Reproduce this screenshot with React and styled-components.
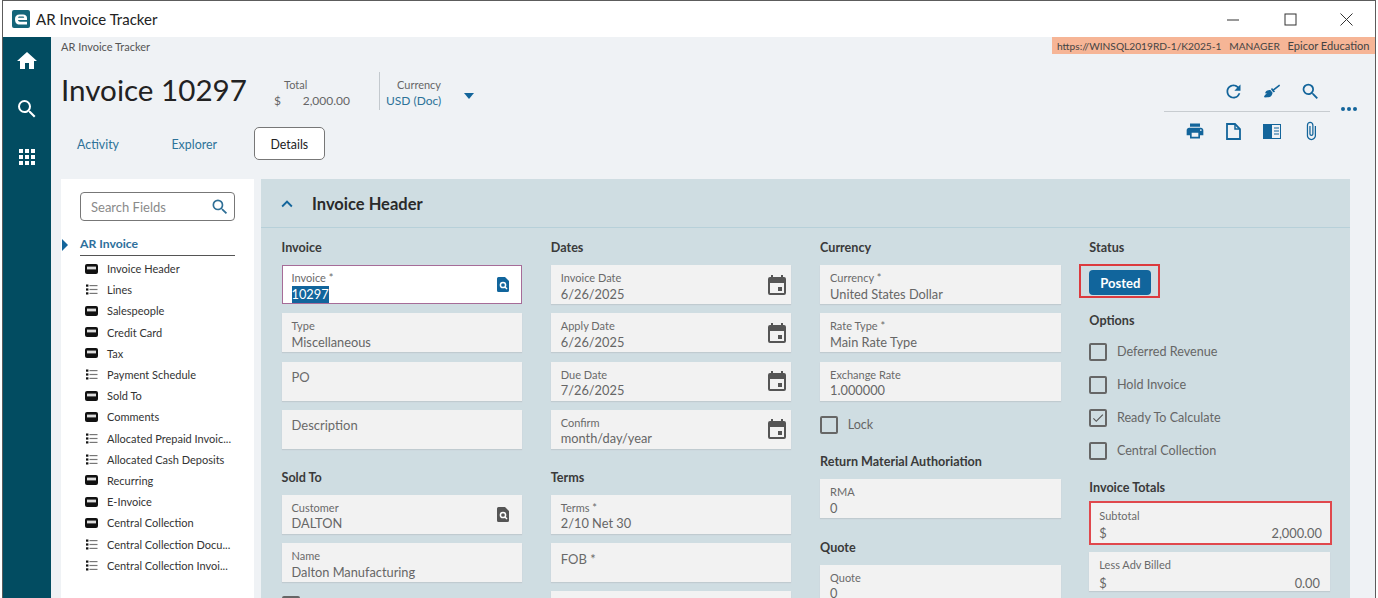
import React from "react";
import styled, { createGlobalStyle } from "styled-components";
import {
  MdHome,
  MdSearch,
  MdApps,
  MdRefresh,
  MdPrint,
  MdAttachFile,
  MdKeyboardArrowUp,
  MdCheck,
} from "react-icons/md";
import { FaBroom } from "react-icons/fa";

const GlobalStyle = createGlobalStyle`
  html, body { margin: 0; padding: 0; background: #fff; }
  body { font-family: "Lato", "Noto Sans", sans-serif; overflow: hidden; }
  * { box-sizing: border-box; }
`;

const Screen = styled.div`
  width: 1378px;
  height: 598px;
  padding: 0 2px;
  overflow: hidden;
`;
const AppWindow = styled.div`
  height: 598px;
  border: 1px solid #5c5c5c;
  border-bottom: none;
  display: flex;
  flex-direction: column;
`;
const TitleBar = styled.header`
  height: 36px;
  flex: none;
  background: #fff;
  display: flex;
  align-items: center;
  padding: 0 0 0 9px;
`;
const WindowTitle = styled.span`
  margin-left: 6px;
  font-size: 15px;
  color: #222;
  flex: 1;
`;
const WinButton = styled.span`
  width: 56.5px;
  display: flex;
  justify-content: center;
  color: #222;
`;
const Shell = styled.div`
  flex: 1;
  display: flex;
  min-height: 0;
`;
const NavRail = styled.nav`
  width: 48px;
  flex: none;
  background: #024c61;
  display: flex;
  flex-direction: column;
  align-items: center;
  color: #fff;
`;
const NavItem = styled.span`
  height: 48px;
  display: flex;
  align-items: center;
  justify-content: center;
  font-size: 24px;
`;
const Main = styled.main`
  flex: 1;
  min-width: 0;
  background: #eff2f5;
  display: flex;
  flex-direction: column;
`;
const TopStrip = styled.div`
  height: 17px;
  flex: none;
  display: flex;
  justify-content: space-between;
  padding-left: 10px;
`;
const Crumb = styled.span`
  font-size: 11px;
  line-height: 20px;
  color: #555;
`;
const EnvBadge = styled.span`
  background: #f6b596;
  color: #444;
  font-size: 10.2px;
  line-height: 17px;
  width: 323px;
  padding-left: 5px;
  white-space: pre;
`;
const EnvCompany = styled.span`
  font-size: 11.1px;
`;
const Head = styled.div`
  height: 125px;
  flex: none;
  display: flex;
  justify-content: space-between;
  padding: 0 18px 0 10px;
`;
const HeadLeft = styled.div`
  display: flex;
  flex-direction: column;
`;
const TitleRow = styled.div`
  height: 73px;
  display: flex;
  align-items: center;
`;
const PageTitle = styled.h1`
  margin: -3px 0 0;
  font-size: 29.6px;
  font-weight: 400;
  color: #222;
  width: 185px;
  white-space: nowrap;
`;
const Stat = styled.div`
  margin-left: ${(p) => p.$left}px;
  padding-top: 5px;
  display: flex;
  flex-direction: column;
  gap: 1px;
  font-size: 12px;
`;
const StatLabel = styled.span`
  color: #666;
  font-size: 11px;
  line-height: 15px;
  padding-left: ${(p) => p.$pad}px;
`;
const StatValue = styled.span`
  display: flex;
  justify-content: space-between;
  width: ${(p) => p.$width}px;
  color: ${(p) => p.$color || "#666"};
  line-height: 16px;
`;
const VRule = styled.span`
  width: 1px;
  height: 38px;
  background: #c3c9ce;
  margin-left: 29px;
`;
const Caret = styled.span`
  margin: 10px 0 0 22px;
  width: 0;
  height: 0;
  border-left: 5px solid transparent;
  border-right: 5px solid transparent;
  border-top: 6px solid #13659b;
`;
const TabRow = styled.div`
  display: flex;
  gap: 20.5px;
  height: 33px;
`;
const Tab = styled.span`
  padding: 1px 16px 0;
  display: flex;
  align-items: center;
  font-size: 12.4px;
  border-radius: 5px;
  color: ${(p) => (p.$active ? "#222" : "#2d7299")};
  background: ${(p) => (p.$active ? "#fff" : "transparent")};
  border: ${(p) => (p.$active ? "1px solid #777" : "none")};
`;
const Tools = styled.div`
  display: flex;
  align-items: flex-start;
  gap: 11px;
`;
const ToolStack = styled.div`
  width: 166px;
  padding-top: 27px;
`;
const ToolRow = styled.div`
  display: flex;
  justify-content: flex-end;
  height: 20px;
  color: #13659b;
`;
const ToolCell = styled.span`
  width: 38.5px;
  display: flex;
  align-items: center;
  justify-content: center;
  font-size: ${(p) => p.$size || 20}px;
`;
const ToolRule = styled.div`
  height: 1px;
  background: #c7ccd0;
  margin: 10px 0 9px;
`;
const Dots = styled.span`
  display: flex;
  gap: 2px;
  margin-top: 53px;
  span {
    width: 4px;
    height: 4px;
    border-radius: 50%;
    background: #13659b;
  }
`;
const Body = styled.div`
  flex: 1;
  min-height: 0;
  display: flex;
  gap: 7px;
  padding: 0 25px 0 10px;
`;
const FieldNav = styled.aside`
  width: 193px;
  flex: none;
  background: #fff;
  padding: 13px 19px 0 1px;
`;
const SearchBox = styled.div`
  margin-left: 18px;
  height: 29px;
  border: 1px solid #777;
  border-radius: 4px;
  display: flex;
  align-items: center;
  justify-content: space-between;
  padding: 0 4px 0 10px;
  color: #8a8a8a;
  font-size: 13px;
  svg { color: #2f6f96; font-size: 20px; }
`;
const TreeHead = styled.div`
  margin-top: 13px;
  display: flex;
  align-items: center;
  gap: 12px;
`;
const TreeMark = styled.span`
  width: 0;
  height: 0;
  border-top: 6px solid transparent;
  border-bottom: 6px solid transparent;
  border-left: 6px solid #13659b;
`;
const TreeTitle = styled.span`
  flex: 1;
  font-size: 12.2px;
  font-weight: 700;
  color: #2d6f9c;
  line-height: 20px;
  border-bottom: 1px solid #555;
  padding-bottom: 1px;
`;
const TreeList = styled.ul`
  list-style: none;
  margin: 2px 0 0;
  padding: 0 0 0 23px;
`;
const TreeItem = styled.li`
  height: 21.2px;
  display: flex;
  align-items: center;
  gap: 9px;
  font-size: 11px;
  color: #333;
  white-space: nowrap;
`;
const Panel = styled.section`
  flex: 1;
  background: #cfdde2;
  min-width: 0;
`;
const PanelHead = styled.div`
  height: 49px;
  border-bottom: 1px solid #b7d0d9;
  display: flex;
  align-items: center;
  padding: 1px 0 0 15px;
  gap: 14px;
  color: #222;
  svg { color: #13659b; font-size: 22px; }
`;
const PanelTitle = styled.h2`
  margin: 0;
  font-size: 16.5px;
  font-weight: 700;
  color: #2a2a2a;
`;
const FormGrid = styled.div`
  display: grid;
  grid-template-columns: repeat(4, 240.6px);
  column-gap: 28.7px;
  padding: 10px 0 0 20.5px;
`;
const Column = styled.div`
  display: flex;
  flex-direction: column;
  align-items: stretch;
`;
const SectionHead = styled.h3`
  margin: ${(p) => p.$top || 0}px 0 ${(p) => p.$bottom ?? 7}px;
  font-size: 12.6px;
  line-height: 20px;
  font-weight: 700;
  color: #3a3a3a;
`;
const fieldPaddingTop = (p) => {
  if (p.$single) return "9.5px";
  if (p.$focus) return "5px";
  return p.$alert ? "6px" : "6px";
};
const Field = styled.div`
  height: ${(p) => p.$height || 39}px;
  flex: none;
  margin-bottom: ${(p) => p.$bottom ?? 9.33}px;
  margin-right: ${(p) => (p.$alert ? "-2px" : "0")};
  padding: ${fieldPaddingTop} ${(p) => (p.$alert ? 8 : p.$focus ? 9 : 10)}px 0;
  display: flex;
  justify-content: space-between;
  background: ${(p) => (p.$focus ? "#fff" : "#f2f2f2")};
  border: ${(p) =>
    p.$focus ? "1px solid #a66c98" : p.$alert ? "2px solid #e0484d" : "none"};
  box-shadow: ${(p) => (p.$focus || p.$alert ? "none" : "0 1px 1px #c0cbd0")};
`;
const FieldText = styled.div`
  min-width: 0;
  flex: 1;
`;
const FieldLabel = styled.div`
  font-size: ${(p) => (p.$big ? 13 : 11)}px;
  line-height: 13px;
  color: #6a6a6a;
`;
const FieldValue = styled.div`
  font-size: 12.8px;
  line-height: 17px;
  color: #666;
  margin-top: ${(p) => p.$gap ?? 1.5}px;
  display: flex;
  justify-content: space-between;
`;
const Selected = styled.span`
  background: #11659c;
  color: #fff;
`;
const FieldIcon = styled.span`
  align-self: center;
  margin: -6px ${(p) => p.$right}px 0 0;
  display: flex;
`;
const CheckRow = styled.label`
  height: ${(p) => p.$height || 33}px;
  display: flex;
  align-items: center;
  gap: 9.6px;
  font-size: 12.6px;
  color: #666;
  flex: none;
`;
const CheckBox = styled.span`
  width: 18px;
  height: 18px;
  flex: none;
  border: 2px solid #666;
  border-radius: 2px;
  display: flex;
  align-items: center;
  justify-content: center;
  color: #555;
  font-size: 14px;
`;
const Highlight = styled.div`
  border: 2px solid #dc3a3e;
  width: 81px;
  height: 34px;
  margin: 0 0 4px -10px;
  padding: 4px 0 0 8px;
`;
const StatusPill = styled.span`
  display: flex;
  align-items: center;
  justify-content: center;
  width: 62px;
  height: 25px;
  background: #11659c;
  color: #fff;
  border-radius: 4px;
  font-size: 13px;
  font-weight: 700;
`;

const CardIcon = () => (
  <svg width="13" height="10" viewBox="0 0 13 10" style={{ flex: "none" }}>
    <rect width="13" height="10" rx="2" fill="#111" />
    <rect x="2" y="2.600" width="9" height="2.800" fill="#ddd" />
  </svg>
);
const ListIcon = () => (
  <svg width="13" height="11" viewBox="0 0 13 11" style={{ flex: "none" }}>
    <rect x="1" y="0.500" width="2.400" height="2.200" fill="#111" />
    <rect x="1" y="4.400" width="2.400" height="2.200" fill="#111" />
    <rect x="1" y="8.300" width="2.400" height="2.200" fill="#111" />
    <rect x="4.500" y="1" width="8" height="1.200" fill="#777" />
    <rect x="4.500" y="4.900" width="8" height="1.200" fill="#777" />
    <rect x="4.500" y="8.800" width="8" height="1.200" fill="#777" />
  </svg>
);
const CalendarIcon = () => (
  <svg width="18" height="20" viewBox="0 0 18 20">
    <path
      d="M3 0h2v2h8V0h2v2h1a2 2 0 0 1 2 2v14a2 2 0 0 1-2 2H2a2 2 0 0 1-2-2V4a2 2 0 0 1 2-2h1zM2 8v10h14V8z"
      fill="#555"
    />
    <rect x="10" y="12" width="4" height="4" fill="#555" />
  </svg>
);
const LookupIcon = ({ color }) => (
  <svg width="12" height="15" viewBox="0 0 12 15">
    <path d="M1.500 0H8l4 4v9.500a1.500 1.500 0 0 1-1.500 1.500h-9A1.500 1.500 0 0 1 0 13.500v-12A1.500 1.500 0 0 1 1.500 0z" fill={color} />
    <circle cx="6" cy="8" r="2.600" fill="none" stroke="#fff" strokeWidth="1.500" />
    <path d="M8 10l2 2" stroke="#fff" strokeWidth="1.500" />
  </svg>
);
const Logo = () => (
  <svg width="18" height="18" viewBox="0 0 18 18">
    <rect width="18" height="18" rx="2" fill="#14657a" />
    <path
      d="M3 9c0-2.800 1.700-4.500 4.500-4.500h3.500c2.400 0 4 1.400 4 3.500v2H6c.2 1.200 .9 1.700 2 1.700h7V14.500H7.500C4.700 14.500 3 12.800 3 9zm3-1.300h6.200c-.1-.8-.6-1.200-1.400-1.200H7.700c-.9 0-1.500.4-1.700 1.200z"
      fill="#fff"
    />
  </svg>
);
const DocIcon = () => (
  <svg width="15" height="17" viewBox="0 0 15 17">
    <path d="M1 1h8l5 5v10H1z" fill="none" stroke="#13659b" strokeWidth="1.800" />
    <path d="M9 1v5h5" fill="none" stroke="#13659b" strokeWidth="1.500" />
  </svg>
);
const PanelIcon = () => (
  <svg width="18" height="15" viewBox="0 0 18 15">
    <rect x="0.500" y="0.500" width="17" height="14" fill="#eff2f5" stroke="#13659b" />
    <rect x="0" y="0" width="9" height="15" fill="#13659b" />
    <path d="M11 4h5M11 7h5M11 10h5" stroke="#13659b" strokeWidth="1.100" />
  </svg>
);

const navItems = [
  ["card", "Invoice Header"],
  ["list", "Lines"],
  ["card", "Salespeople"],
  ["card", "Credit Card"],
  ["card", "Tax"],
  ["list", "Payment Schedule"],
  ["card", "Sold To"],
  ["card", "Comments"],
  ["list", "Allocated Prepaid Invoic..."],
  ["list", "Allocated Cash Deposits"],
  ["card", "Recurring"],
  ["card", "E-Invoice"],
  ["card", "Central Collection"],
  ["list", "Central Collection Docu..."],
  ["list", "Central Collection Invoi..."],
];

const TextField = ({ label, value, icon, iconRight = 0, ...rest }) => (
  <Field $single={!value} {...rest}>
    <FieldText>
      <FieldLabel $big={!value}>{label}</FieldLabel>
      {value && <FieldValue>{value}</FieldValue>}
    </FieldText>
    {icon && <FieldIcon $right={iconRight}>{icon}</FieldIcon>}
  </Field>
);

const DateField = (props) => <TextField icon={<CalendarIcon />} iconRight={-5} {...props} />;

const Check = ({ label, checked, height }) => (
  <CheckRow $height={height}>
    <CheckBox>{checked && <MdCheck />}</CheckBox>
    {label}
  </CheckRow>
);

export default function App() {
  return (
    <Screen>
      <GlobalStyle />
      <AppWindow>
        <TitleBar>
          <Logo />
          <WindowTitle>AR Invoice Tracker</WindowTitle>
          <WinButton>
            <svg width="13" height="13" viewBox="0 0 13 13">
              <path d="M0 7h12" stroke="#333" />
            </svg>
          </WinButton>
          <WinButton>
            <svg width="13" height="13" viewBox="0 0 13 13">
              <rect x="1" y="1" width="11" height="11" fill="none" stroke="#333" />
            </svg>
          </WinButton>
          <WinButton>
            <svg width="13" height="13" viewBox="0 0 13 13">
              <path d="M0.500 0.500l12 12M12.500 0.500l-12 12" stroke="#333" />
            </svg>
          </WinButton>
        </TitleBar>
        <Shell>
          <NavRail>
            <NavItem>
              <MdHome />
            </NavItem>
            <NavItem>
              <MdSearch />
            </NavItem>
            <NavItem>
              <MdApps />
            </NavItem>
          </NavRail>
          <Main>
            <TopStrip>
              <Crumb>AR Invoice Tracker</Crumb>
              <EnvBadge>
                https://WINSQL2019RD-1/K2025-1   MANAGER   <EnvCompany>Epicor Education</EnvCompany>
              </EnvBadge>
            </TopStrip>
            <Head>
              <HeadLeft>
                <TitleRow>
                  <PageTitle>Invoice 10297</PageTitle>
                  <Stat $left={28}>
                    <StatLabel $pad={10}>Total</StatLabel>
                    <StatValue $width={76}>
                      <span>$</span>
                      <span>2,000.00</span>
                    </StatValue>
                  </Stat>
                  <VRule />
                  <Stat $left={6}>
                    <StatLabel $pad={11}>Currency</StatLabel>
                    <StatValue $width={56} $color="#2d7299">
                      USD (Doc)
                    </StatValue>
                  </Stat>
                  <Caret />
                </TitleRow>
                <TabRow>
                  <Tab>Activity</Tab>
                  <Tab>Explorer</Tab>
                  <Tab $active>Details</Tab>
                </TabRow>
              </HeadLeft>
              <Tools>
                <ToolStack>
                  <ToolRow>
                    <ToolCell $size={21}>
                      <MdRefresh />
                    </ToolCell>
                    <ToolCell $size={16}>
                      <FaBroom />
                    </ToolCell>
                    <ToolCell $size={21}>
                      <MdSearch />
                    </ToolCell>
                  </ToolRow>
                  <ToolRule />
                  <ToolRow>
                    <ToolCell>
                      <MdPrint />
                    </ToolCell>
                    <ToolCell>
                      <DocIcon />
                    </ToolCell>
                    <ToolCell>
                      <PanelIcon />
                    </ToolCell>
                    <ToolCell>
                      <MdAttachFile />
                    </ToolCell>
                  </ToolRow>
                </ToolStack>
                <Dots>
                  <span />
                  <span />
                  <span />
                </Dots>
              </Tools>
            </Head>
            <Body>
              <FieldNav>
                <SearchBox>
                  Search Fields
                  <MdSearch />
                </SearchBox>
                <TreeHead>
                  <TreeMark />
                  <TreeTitle>AR Invoice</TreeTitle>
                </TreeHead>
                <TreeList>
                  {navItems.map(([kind, label]) => (
                    <TreeItem key={label}>
                      {kind === "card" ? <CardIcon /> : <ListIcon />}
                      {label}
                    </TreeItem>
                  ))}
                </TreeList>
              </FieldNav>
              <Panel>
                <PanelHead>
                  <MdKeyboardArrowUp />
                  <PanelTitle>Invoice Header</PanelTitle>
                </PanelHead>
                <FormGrid>
                  <Column>
                    <SectionHead>Invoice</SectionHead>
                    <TextField
                      $focus
                      label="Invoice *"
                      value={<Selected>10297</Selected>}
                      icon={<LookupIcon color="#11659c" />}
                      iconRight={3}
                    />
                    <TextField label="Type" value="Miscellaneous" />
                    <TextField label="PO" />
                    <TextField label="Description" />
                    <SectionHead $top={9.5}>Sold To</SectionHead>
                    <TextField
                      label="Customer"
                      value="DALTON"
                      icon={<LookupIcon color="#555" />}
                      iconRight={3}
                    />
                    <TextField label="Name" value="Dalton Manufacturing" />
                    <Check label="" height={28} />
                  </Column>
                  <Column>
                    <SectionHead>Dates</SectionHead>
                    <DateField label="Invoice Date" value="6/26/2025" />
                    <DateField label="Apply Date" value="6/26/2025" />
                    <DateField label="Due Date" value="7/26/2025" />
                    <DateField label="Confirm" value="month/day/year" />
                    <SectionHead $top={9.5}>Terms</SectionHead>
                    <TextField label="Terms *" value="2/10 Net 30" />
                    <TextField label="FOB *" />
                    <TextField label="" />
                  </Column>
                  <Column>
                    <SectionHead>Currency</SectionHead>
                    <TextField label="Currency *" value="United States Dollar" />
                    <TextField label="Rate Type *" value="Main Rate Type" />
                    <TextField label="Exchange Rate" value="1.000000" />
                    <Check label="Lock" height={30} />
                    <SectionHead $top={12.5}>Return Material Authoriation</SectionHead>
                    <TextField label="RMA" value="0" />
                    <SectionHead $top={10}>Quote</SectionHead>
                    <TextField label="Quote" value="0" />
                  </Column>
                  <Column>
                    <SectionHead $bottom={6}>Status</SectionHead>
                    <Highlight>
                      <StatusPill>Posted</StatusPill>
                    </Highlight>
                    <SectionHead $top={9} $bottom={4}>
                      Options
                    </SectionHead>
                    <Check label="Deferred Revenue" />
                    <Check label="Hold Invoice" />
                    <Check checked label="Ready To Calculate" />
                    <Check label="Central Collection" />
                    <SectionHead $top={11} $bottom={3}>
                      Invoice Totals
                    </SectionHead>
                    <Field $alert $height={44} $bottom={7}>
                      <FieldText>
                        <FieldLabel>Subtotal</FieldLabel>
                        <FieldValue $gap={2.5}>
                          <span>$</span>
                          <span>2,000.00</span>
                        </FieldValue>
                      </FieldText>
                    </Field>
                    <Field>
                      <FieldText>
                        <FieldLabel>Less Adv Billed</FieldLabel>
                        <FieldValue $gap={3.5}>
                          <span>$</span>
                          <span>0.00</span>
                        </FieldValue>
                      </FieldText>
                    </Field>
                  </Column>
                </FormGrid>
              </Panel>
            </Body>
          </Main>
        </Shell>
      </AppWindow>
    </Screen>
  );
}
